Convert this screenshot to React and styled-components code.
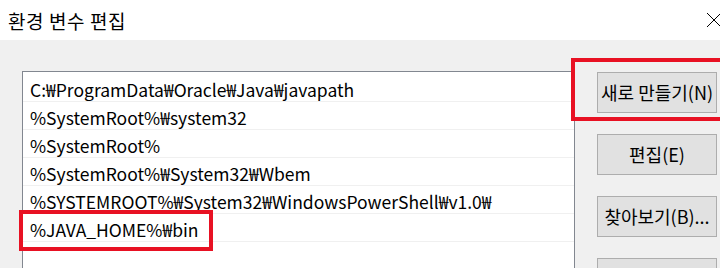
import React from 'react';
import styled, { createGlobalStyle } from 'styled-components';

const GlobalStyle = createGlobalStyle`
  html, body { margin: 0; padding: 0; }
  body {
    background: #f0f0f0;
    font-family: "Noto Sans CJK KR", "Noto Sans", sans-serif;
    color: #000;
    overflow: hidden;
  }
`;

const Window = styled.div`
  width: 720px; height: 268px;
  display: flex; flex-direction: column;
  background: #f0f0f0;
  overflow: hidden;
`;

const TitleBar = styled.div`
  height: 40px; flex: none;
  background: #fff;
  display: flex; align-items: center; justify-content: space-between;
  padding: 0 0 0 8px;
  h1 { margin: 0; font-size: 19px; font-weight: 400; letter-spacing: 0.6px; }
`;

const CloseIcon = styled.svg`
  width: 14px; height: 15px; margin-top: -2px;
`;

const Body = styled.div`
  flex: 1;
  display: flex; align-items: flex-start;
  gap: 22px;
  padding: 31px 0 0 22px;
`;

const List = styled.div`
  width: 551px; height: 220px;
  flex: none;
  background: #fff;
  border: 1px solid #828790;
  padding-top: 2px;
`;

const Row = styled.div`
  position: relative;
  height: 24px;
  padding: 3px 0 0 7px;
  border-bottom: 1px solid #f0f0f0;
  font-size: 17.5px;
  line-height: 26px;
  white-space: nowrap;
`;

const Highlight = styled.div`
  position: absolute;
  border: 4px solid #e81123;
  pointer-events: none;
`;

const RowHighlight = styled(Highlight)`
  left: -4px; top: -4px;
  width: 186px; height: 33px;
`;

const Buttons = styled.div`
  display: flex; flex-direction: column;
  gap: 21px;
  margin-top: 1px;
`;

const ButtonSlot = styled.div`
  position: relative;
`;

const ButtonHighlight = styled(Highlight)`
  left: -26px; top: -14px;
  width: 160px; height: 55px;
`;

const Button = styled.button`
  display: block;
  width: 120px; height: 41px;
  background: #e1e1e1;
  border: 1px solid #adadad;
  font-family: "Noto Sans CJK KR", "Noto Sans", sans-serif;
  font-size: 18px;
  color: #000;
  padding: 0 0 2px;
  white-space: nowrap;
`;

const paths = [
  'C:₩ProgramData₩Oracle₩Java₩javapath',
  '%SystemRoot%₩system32',
  '%SystemRoot%',
  '%SystemRoot%₩System32₩Wbem',
  '%SYSTEMROOT%₩System32₩WindowsPowerShell₩v1.0₩',
  '%JAVA_HOME%₩bin',
  '',
];

// 마지막 버튼은 화면 밖으로 잘려서 글자가 보이지 않음
const actions = ['새로 만들기(N)', '편집(E)', '찾아보기(B)...', ''];

const App = () => {
  return (
    <>
      <GlobalStyle />
      <Window>
        <TitleBar>
          <h1>환경 변수 편집</h1>
          <CloseIcon viewBox="0 0 14 15">
            <path d="M1 1 L15 15 M15 1 L1 15" stroke="#000" strokeWidth="1" fill="none" />
          </CloseIcon>
        </TitleBar>
        <Body>
          <List>
            {paths.map((p, i) => (
              <Row key={i}>
                {p}
                {p === '%JAVA_HOME%₩bin' && <RowHighlight />}
              </Row>
            ))}
          </List>
          <Buttons>
            {actions.map((a, i) => (
              <ButtonSlot key={i}>
                <Button>{a}</Button>
                {i === 0 && <ButtonHighlight />}
              </ButtonSlot>
            ))}
          </Buttons>
        </Body>
      </Window>
    </>
  );
};

export default App;
